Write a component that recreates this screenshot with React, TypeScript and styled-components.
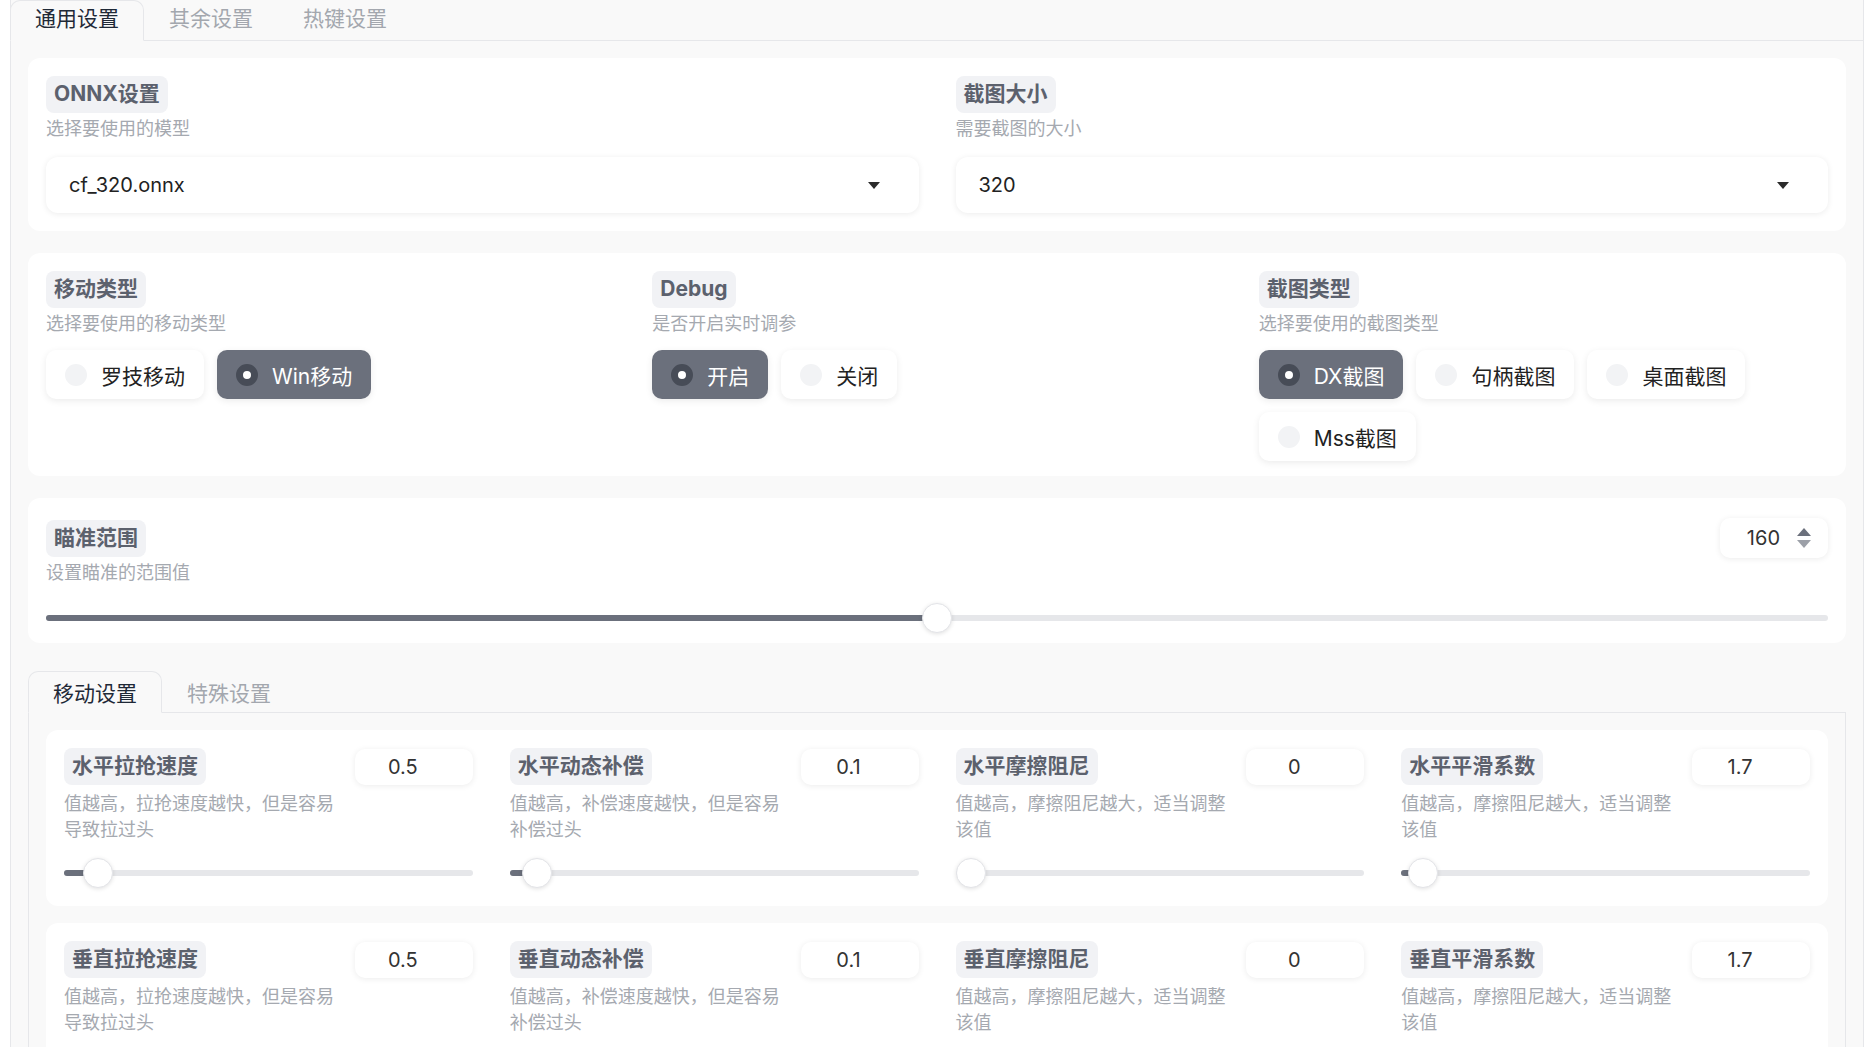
import React from 'react';
import styled, { createGlobalStyle } from 'styled-components';

const GlobalStyle = createGlobalStyle`
  html, body {
    margin: 0;
    padding: 0;
    background: #ffffff;
  }
  body {
    font-family: Inter, "Noto Sans CJK SC", sans-serif;
    color: #1f2937;
  }
  * {
    box-sizing: border-box;
  }
`;

interface SliderItem {
  title: string;
  value: string;
  desc: string;
  pct: number;
}

const horizontal: SliderItem[] = [
  { title: '水平拉抢速度', value: '0.5', desc: '值越高，拉抢速度越快，但是容易导致拉过头', pct: 0.05 },
  { title: '水平动态补偿', value: '0.1', desc: '值越高，补偿速度越快，但是容易补偿过头', pct: 0.033 },
  { title: '水平摩擦阻尼', value: '0', desc: '值越高，摩擦阻尼越大，适当调整该值', pct: 0 },
  { title: '水平平滑系数', value: '1.7', desc: '值越高，摩擦阻尼越大，适当调整该值', pct: 0.017 },
];

const vertical: SliderItem[] = [
  { title: '垂直拉抢速度', value: '0.5', desc: '值越高，拉抢速度越快，但是容易导致拉过头', pct: 0.05 },
  { title: '垂直动态补偿', value: '0.1', desc: '值越高，补偿速度越快，但是容易补偿过头', pct: 0.033 },
  { title: '垂直摩擦阻尼', value: '0', desc: '值越高，摩擦阻尼越大，适当调整该值', pct: 0 },
  { title: '垂直平滑系数', value: '1.7', desc: '值越高，摩擦阻尼越大，适当调整该值', pct: 0.017 },
];

const Slider = ({ pct }: { pct: number }) => (
  <SliderRoot>
    <Track />
    <Fill style={{ width: `calc((100% - 30px) * ${pct} + 15px)`, opacity: pct > 0 ? 1 : 0 }} />
    <Thumb style={{ left: `calc((100% - 30px) * ${pct})` }} />
  </SliderRoot>
);

const Option = ({ label, active }: { label: string; active?: boolean }) => (
  <OptionButton $active={active}>
    <RadioDot $active={active} />
    <span>{label}</span>
  </OptionButton>
);

const ItemCard = ({ items }: { items: SliderItem[] }) => (
  <Card>
    <Grid $cols={4}>
      {items.map(item => (
        <Field key={item.title}>
          <Header $h={37}>
            <Badge>{item.title}</Badge>
            <ValueBox>{item.value}</ValueBox>
          </Header>
          <Desc $narrow>{item.desc}</Desc>
          <SliderSpace $mt={15}>
            <Slider pct={item.pct} />
          </SliderSpace>
        </Field>
      ))}
    </Grid>
  </Card>
);

export default function App() {
  return (
    <>
      <GlobalStyle />
      <Page>
        <Frame>
          <TabBar $outer>
            <Tab $active $h={40} $lh={36}>通用设置</Tab>
            <Tab $h={40} $lh={36}>其余设置</Tab>
            <Tab $h={40} $lh={36}>热键设置</Tab>
          </TabBar>
          <Content>
            <Card>
              <Grid $cols={2}>
                <Field>
                  <Badge>ONNX设置</Badge>
                  <Desc>选择要使用的模型</Desc>
                  <Select>
                    <span>cf_320.onnx</span>
                    <Caret />
                  </Select>
                </Field>
                <Field>
                  <Badge>截图大小</Badge>
                  <Desc>需要截图的大小</Desc>
                  <Select>
                    <span>320</span>
                    <Caret />
                  </Select>
                </Field>
              </Grid>
            </Card>

            <Card $pb={15}>
              <Grid $cols={3}>
                <Field>
                  <Badge>移动类型</Badge>
                  <Desc>选择要使用的移动类型</Desc>
                  <OptionRow>
                    <Option label="罗技移动" />
                    <Option label="Win移动" active />
                  </OptionRow>
                </Field>
                <Field>
                  <Badge>Debug</Badge>
                  <Desc>是否开启实时调参</Desc>
                  <OptionRow>
                    <Option label="开启" active />
                    <Option label="关闭" />
                  </OptionRow>
                </Field>
                <Field>
                  <Badge>截图类型</Badge>
                  <Desc>选择要使用的截图类型</Desc>
                  <OptionRow>
                    <Option label="DX截图" active />
                    <Option label="句柄截图" />
                    <Option label="桌面截图" />
                    <Option label="Mss截图" />
                  </OptionRow>
                </Field>
              </Grid>
            </Card>

            <Card $pt={20} $pb={10}>
              <Field>
                <Header $h={40}>
                  <Badge>瞄准范围</Badge>
                  <NumberBox>
                    <span>160</span>
                    <Spinner>
                      <SpinUp />
                      <SpinDown />
                    </Spinner>
                  </NumberBox>
                </Header>
                <Desc $tight>设置瞄准的范围值</Desc>
                <SliderSpace $mt={17}>
                  <Slider pct={0.5} />
                </SliderSpace>
              </Field>
            </Card>

            <InnerTabs>
              <TabBar>
                <Tab $active $h={41} $lh={44}>移动设置</Tab>
                <Tab $h={41} $lh={44}>特殊设置</Tab>
              </TabBar>
              <Panel>
                <ItemCard items={horizontal} />
                <ItemCard items={vertical} />
              </Panel>
            </InnerTabs>
          </Content>
        </Frame>
      </Page>
    </>
  );
}

const Page = styled.div`
  padding: 0 8px 0 10px;
`;

const Frame = styled.div`
  min-height: 100vh;
  background: #f9f9f9;
  border-left: 1px solid #e6e7ea;
  border-right: 1px solid #e6e7ea;
`;

const TabBar = styled.div<{ $outer?: boolean }>`
  display: flex;
  align-items: flex-end;
  border-bottom: 1px solid #e6e7ea;
  margin-left: ${p => (p.$outer ? '-1px' : '0')};
`;

const Tab = styled.div<{ $active?: boolean; $h: number; $lh: number }>`
  height: ${p => p.$h + 1}px;
  line-height: ${p => p.$lh}px;
  margin-bottom: -1px;
  padding: 0 24px;
  font-size: 21px;
  overflow: hidden;
  color: ${p => (p.$active ? '#1f2937' : '#a3a7ae')};
  background: ${p => (p.$active ? '#f9f9f9' : 'transparent')};
  border: 1px solid ${p => (p.$active ? '#e6e7ea' : 'transparent')};
  border-bottom-color: ${p => (p.$active ? '#f9f9f9' : 'transparent')};
  border-radius: 10px 10px 0 0;
`;

const Content = styled.div`
  display: flex;
  flex-direction: column;
  gap: 22px;
  padding: 17px 17px 0 17px;
`;

const Card = styled.div<{ $pt?: number; $pb?: number }>`
  background: #ffffff;
  border-radius: 12px;
  padding: ${p => p.$pt ?? 18}px 18px ${p => p.$pb ?? 18}px 18px;
`;

const Grid = styled.div<{ $cols: number }>`
  display: grid;
  grid-template-columns: repeat(${p => p.$cols}, minmax(0, 1fr));
  column-gap: 37px;
`;

const Field = styled.div`
  display: flex;
  flex-direction: column;
  align-items: flex-start;
  min-width: 0;
`;

const Header = styled.div<{ $h: number }>`
  align-self: stretch;
  height: ${p => p.$h}px;
  display: flex;
  align-items: center;
  justify-content: space-between;
`;

const Badge = styled.span`
  display: inline-block;
  padding: 3px 8px 5px;
  border-radius: 8px;
  background: #f1f2f5;
  color: #5c616d;
  font-size: 21px;
  line-height: 29px;
  font-weight: 700;
  white-space: nowrap;
`;

const Desc = styled.div<{ $narrow?: boolean; $tight?: boolean }>`
  margin-top: ${p => (p.$tight ? 2 : p.$narrow ? 6 : 3)}px;
  max-width: ${p => (p.$narrow ? '280px' : 'none')};
  font-size: 18px;
  line-height: 26px;
  color: #a5a9b0;
`;

const Select = styled.div`
  margin-top: 15px;
  width: 100%;
  height: 56px;
  display: flex;
  align-items: center;
  justify-content: space-between;
  padding: 0 39px 0 23px;
  background: #ffffff;
  border-radius: 12px;
  box-shadow: 0 1px 6px rgba(0, 0, 0, 0.08);
  font-size: 20px;
  color: #222222;
`;

const Caret = styled.span`
  width: 0;
  height: 0;
  border-left: 6px solid transparent;
  border-right: 6px solid transparent;
  border-top: 7px solid #2b2b2b;
`;

const OptionRow = styled.div`
  margin-top: 13px;
  display: flex;
  flex-wrap: wrap;
  gap: 13px;
`;

const OptionButton = styled.div<{ $active?: boolean }>`
  height: 49px;
  display: inline-flex;
  align-items: center;
  gap: 14px;
  padding: 0 19px;
  border-radius: 10px;
  background: ${p => (p.$active ? '#6b707c' : '#ffffff')};
  color: ${p => (p.$active ? '#ffffff' : '#222222')};
  box-shadow: 0 2px 7px rgba(0, 0, 0, 0.08);
  font-size: 21px;
  white-space: nowrap;
`;

const RadioDot = styled.span<{ $active?: boolean }>`
  width: 22px;
  height: 22px;
  border-radius: 50%;
  background: ${p => (p.$active ? '#ffffff' : '#f2f3f5')};
  border: ${p => (p.$active ? '7px solid #474c57' : 'none')};
`;

const NumberBox = styled.div`
  width: 108px;
  height: 40px;
  display: flex;
  align-items: center;
  justify-content: flex-end;
  gap: 17px;
  padding-right: 17px;
  background: #ffffff;
  border-radius: 10px;
  box-shadow: 0 1px 6px rgba(0, 0, 0, 0.08);
  font-size: 20px;
  color: #333333;
`;

const Spinner = styled.div`
  display: flex;
  flex-direction: column;
  gap: 4px;
`;

const SpinUp = styled.span`
  width: 0;
  height: 0;
  border-left: 7px solid transparent;
  border-right: 7px solid transparent;
  border-bottom: 8px solid #6b707c;
`;

const SpinDown = styled.span`
  width: 0;
  height: 0;
  border-left: 7px solid transparent;
  border-right: 7px solid transparent;
  border-top: 8px solid #9ca0a8;
`;

const ValueBox = styled.div`
  width: 118px;
  height: 36px;
  display: flex;
  align-items: center;
  justify-content: center;
  padding-right: 22px;
  background: #ffffff;
  border-radius: 10px;
  box-shadow: 0 1px 6px rgba(0, 0, 0, 0.08);
  font-size: 20px;
  color: #333333;
`;

const SliderSpace = styled.div<{ $mt: number }>`
  align-self: stretch;
  margin-top: ${p => p.$mt}px;
`;

const SliderRoot = styled.div`
  position: relative;
  height: 30px;
`;

const Track = styled.div`
  position: absolute;
  left: 0;
  right: 0;
  top: 12px;
  height: 6px;
  border-radius: 3px;
  background: #e6e7ea;
`;

const Fill = styled.div`
  position: absolute;
  left: 0;
  top: 12px;
  height: 6px;
  border-radius: 3px;
  background: #6b707c;
`;

const Thumb = styled.div`
  position: absolute;
  top: 0;
  width: 30px;
  height: 30px;
  border-radius: 50%;
  background: #ffffff;
  border: 1px solid #e3e4e8;
  box-shadow: 0 1px 4px rgba(0, 0, 0, 0.12);
`;

const InnerTabs = styled.div`
  margin-top: 6px;
`;

const Panel = styled.div`
  display: flex;
  flex-direction: column;
  gap: 17px;
  padding: 17px;
  border: 1px solid #e6e7ea;
  border-top: none;
`;
